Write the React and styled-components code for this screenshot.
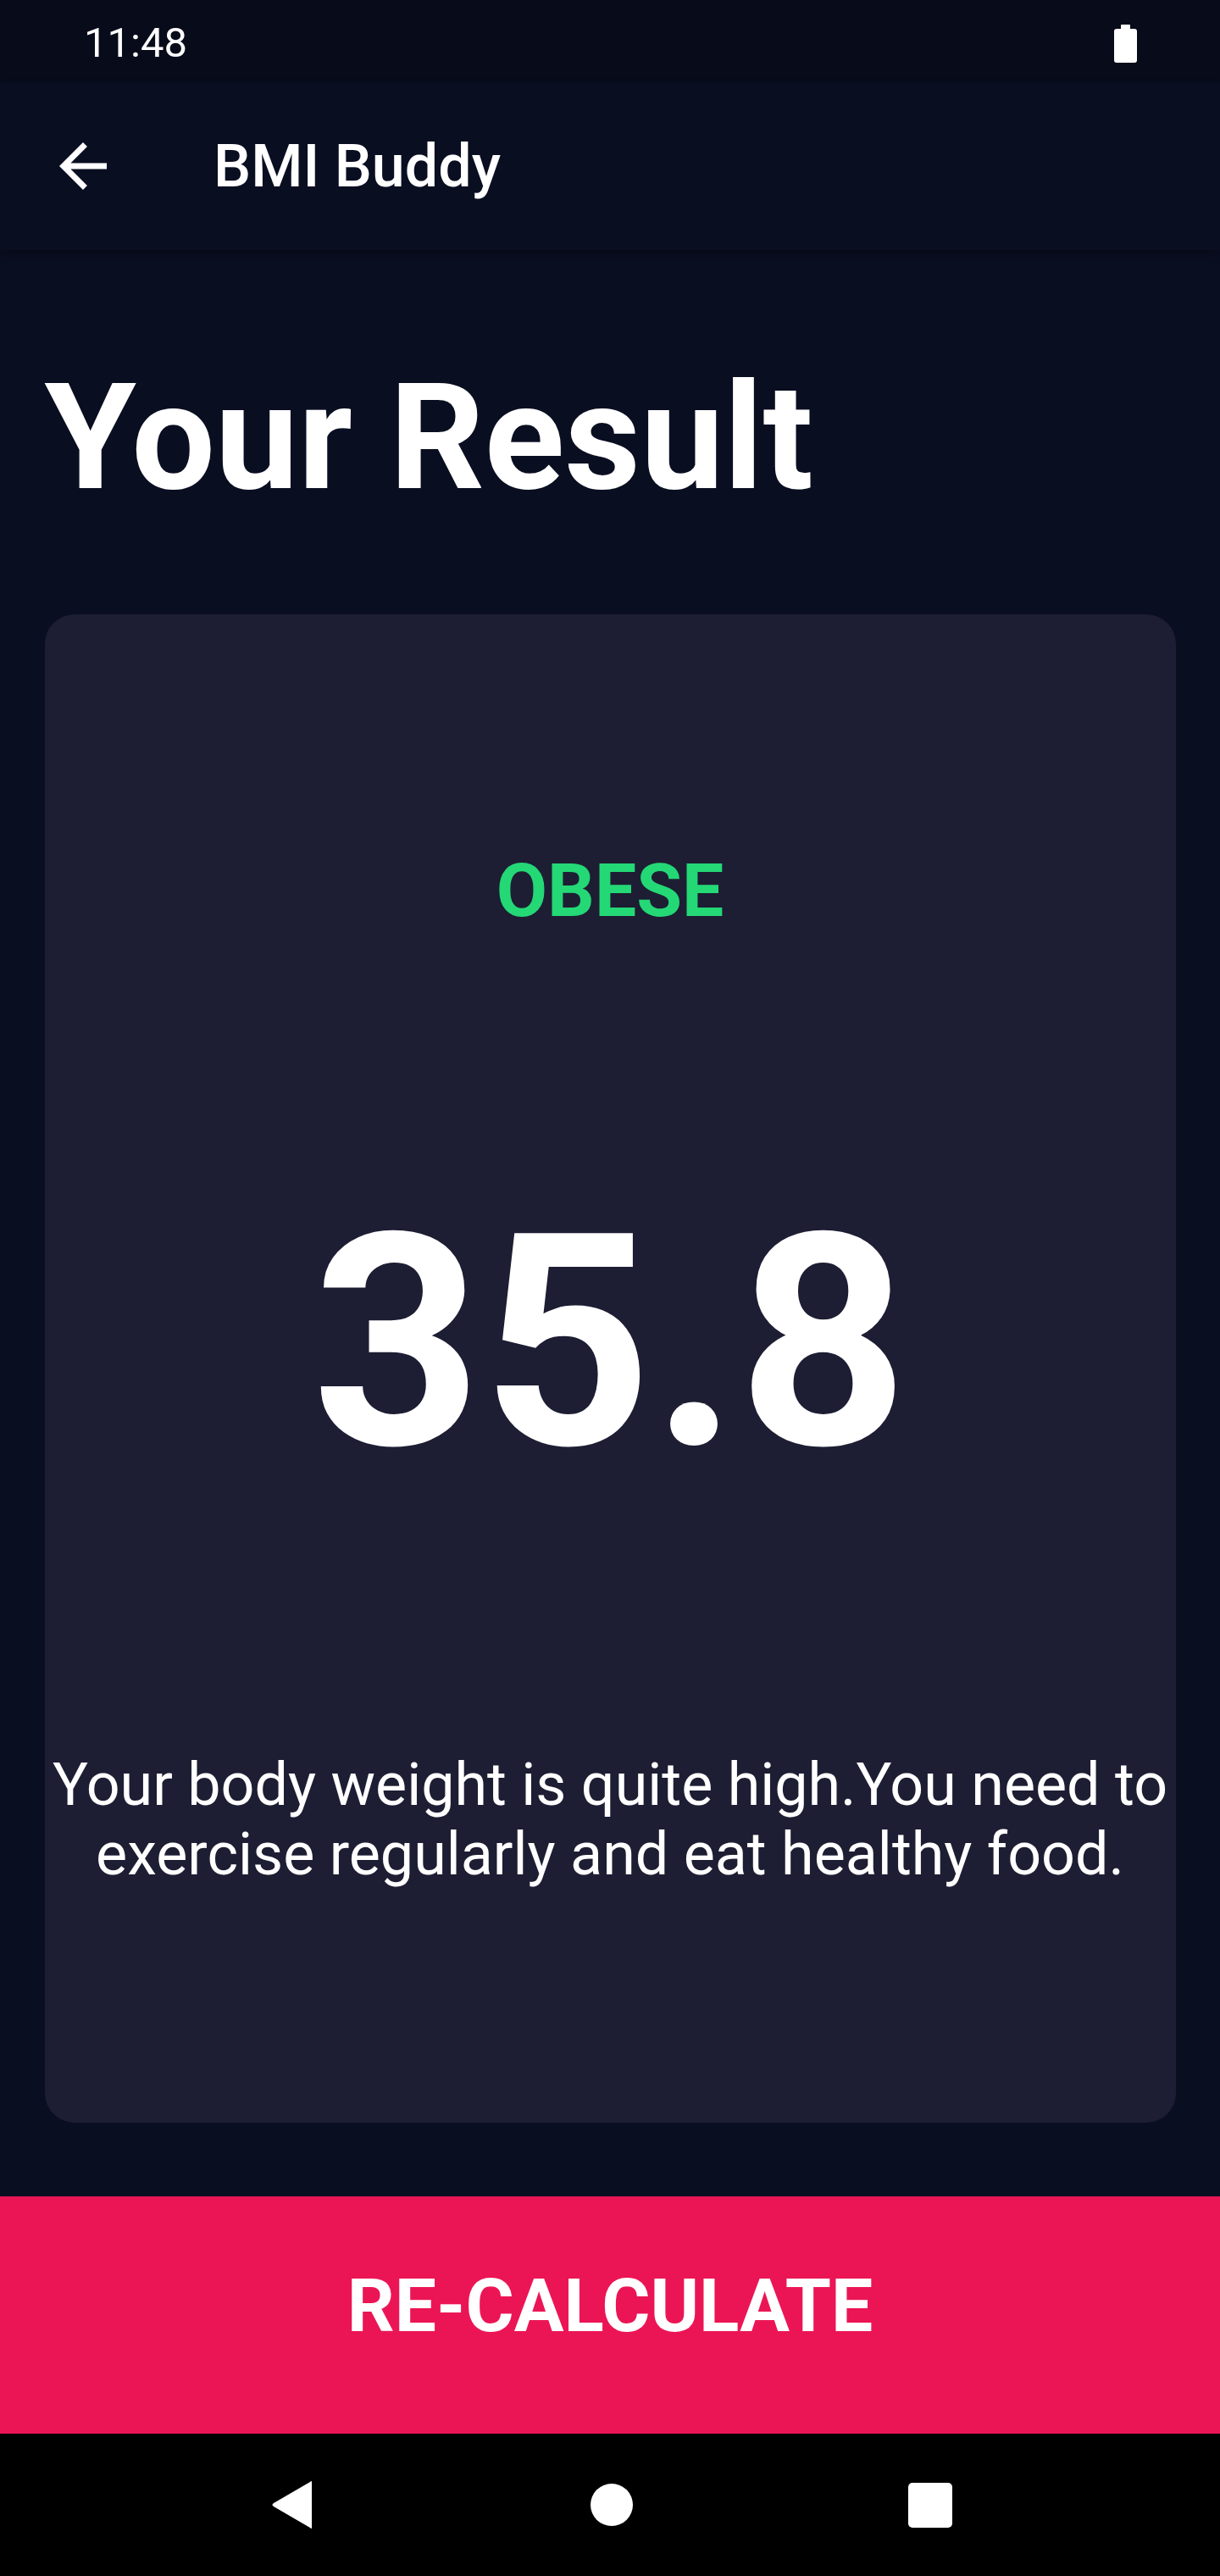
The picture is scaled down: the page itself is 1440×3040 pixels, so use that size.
import React from "react";
import styled, { createGlobalStyle } from "styled-components";

const GlobalStyle = createGlobalStyle`
  html, body {
    margin: 0;
    padding: 0;
    background: #0a0e21;
  }
  body {
    font-family: Roboto, "Liberation Sans", sans-serif;
    color: #ffffff;
  }
  * {
    box-sizing: border-box;
  }
`;

const Screen = styled.div`
  width: 1440px;
  height: 3040px;
  display: flex;
  flex-direction: column;
  background: #0a0e21;
  overflow: hidden;
`;

const StatusBar = styled.div`
  height: 97px;
  flex-shrink: 0;
  background: #080b19;
  display: flex;
  align-items: center;
  justify-content: space-between;
  padding: 0 98px 0 99px;

  .time {
    font-size: 49px;
    line-height: 1;
    font-weight: 400;
    margin-top: 4px;
  }
`;

const Battery = styled.div`
  display: flex;
  flex-direction: column;
  align-items: center;
  margin-top: 6px;

  .nub {
    width: 11px;
    height: 5px;
    background: #fff;
    border-radius: 1px 1px 0 0;
  }

  .body {
    width: 27px;
    height: 40px;
    background: #fff;
    border-radius: 3px;
  }
`;

const AppBar = styled.header`
  height: 198px;
  flex-shrink: 0;
  background: #0a0e21;
  display: flex;
  align-items: center;
  padding-left: 56px;
  position: relative;
  z-index: 1;
  box-shadow: 0 6px 10px rgba(0, 0, 0, 0.25);
`;

const BackButton = styled.button`
  width: 84px;
  height: 84px;
  padding: 0;
  border: 0;
  background: transparent;
  display: flex;
  align-items: center;
  justify-content: center;
  cursor: pointer;

  svg {
    width: 84px;
    height: 84px;
    display: block;
  }
`;

const AppTitle = styled.h1`
  margin: 0 0 0 112px;
  font-size: 70px;
  font-weight: 500;
  line-height: 1.172;
  color: #fff;
`;

const Main = styled.main`
  flex: 1;
  min-height: 0;
  display: grid;
  grid-template-rows: 1fr 5fr;
  margin-bottom: 35px;
`;

const TitleArea = styled.div`
  min-height: 0;
  display: flex;
  align-items: flex-end;
  padding: 52.5px;
`;

const PageTitle = styled.h2`
  margin: 0;
  font-size: 175px;
  font-weight: 700;
  line-height: 1.172;
  color: #fff;
`;

const CardSlot = styled.div`
  min-height: 0;
  display: flex;
  padding: 52.5px;
`;

const Card = styled.section`
  flex: 1;
  background: #1d1e33;
  border-radius: 35px;
  display: flex;
  flex-direction: column;
  justify-content: space-evenly;
  align-items: center;
  text-align: center;
`;

const ResultLabel = styled.div`
  font-size: 87.5px;
  font-weight: 700;
  line-height: 1.172;
  color: #24d876;
`;

const BmiValue = styled.div`
  font-size: 350px;
  font-weight: 700;
  line-height: 1.172;
  color: #fff;
`;

const Advice = styled.p`
  margin: 0;
  font-size: 70px;
  font-weight: 400;
  line-height: 1.172;
  color: #fff;
`;

const BottomButton = styled.button`
  height: 280px;
  flex-shrink: 0;
  width: 100%;
  border: 0;
  margin: 0;
  background: #eb1555;
  color: #fff;
  font-family: Roboto, "Liberation Sans", sans-serif;
  font-size: 87.5px;
  font-weight: 700;
  line-height: 1.172;
  padding: 0 0 22px;
  display: flex;
  align-items: center;
  justify-content: center;
  cursor: pointer;
`;

const NavBar = styled.nav`
  height: 168px;
  flex-shrink: 0;
  background: #000;
  display: flex;
  align-items: center;
  justify-content: center;
  gap: 292px;
  padding-left: 4px;
`;

const NavKey = styled.div`
  width: 84px;
  height: 84px;
  display: flex;
  align-items: center;
  justify-content: center;

  svg {
    display: block;
  }
`;

export default function App() {
  return (
    <>
      <GlobalStyle />
      <Screen>
        <StatusBar>
          <span className="time">11:48</span>
          <Battery>
            <div className="nub" />
            <div className="body" />
          </Battery>
        </StatusBar>

        <AppBar>
          <BackButton aria-label="Back">
            <svg viewBox="0 0 24 24" fill="#fff">
              <path d="M20 11H7.83l5.59-5.59L12 4l-8 8 8 8 1.41-1.41L7.83 13H20v-2z" />
            </svg>
          </BackButton>
          <AppTitle>BMI Buddy</AppTitle>
        </AppBar>

        <Main>
          <TitleArea>
            <PageTitle>Your Result</PageTitle>
          </TitleArea>

          <CardSlot>
            <Card>
              <ResultLabel>OBESE</ResultLabel>
              <BmiValue>35.8</BmiValue>
              <Advice>
                Your body weight is quite high.You need to exercise regularly
                and eat healthy food.
              </Advice>
            </Card>
          </CardSlot>
        </Main>

        <BottomButton>RE-CALCULATE</BottomButton>

        <NavBar>
          <NavKey>
            <svg width="52" height="58" viewBox="0 0 52 58">
              <path
                d="M48 2 L48 56 Q48 58 46 56 L3 31 Q0 29 3 27 L46 2 Q48 0 48 2 Z"
                fill="#fff"
              />
            </svg>
          </NavKey>
          <NavKey>
            <svg width="50" height="50" viewBox="0 0 50 50">
              <circle cx="25" cy="25" r="25" fill="#fff" />
            </svg>
          </NavKey>
          <NavKey>
            <svg width="52" height="53" viewBox="0 0 52 53">
              <rect x="0" y="0" width="52" height="53" rx="5" fill="#fff" />
            </svg>
          </NavKey>
        </NavBar>
      </Screen>
    </>
  );
}
